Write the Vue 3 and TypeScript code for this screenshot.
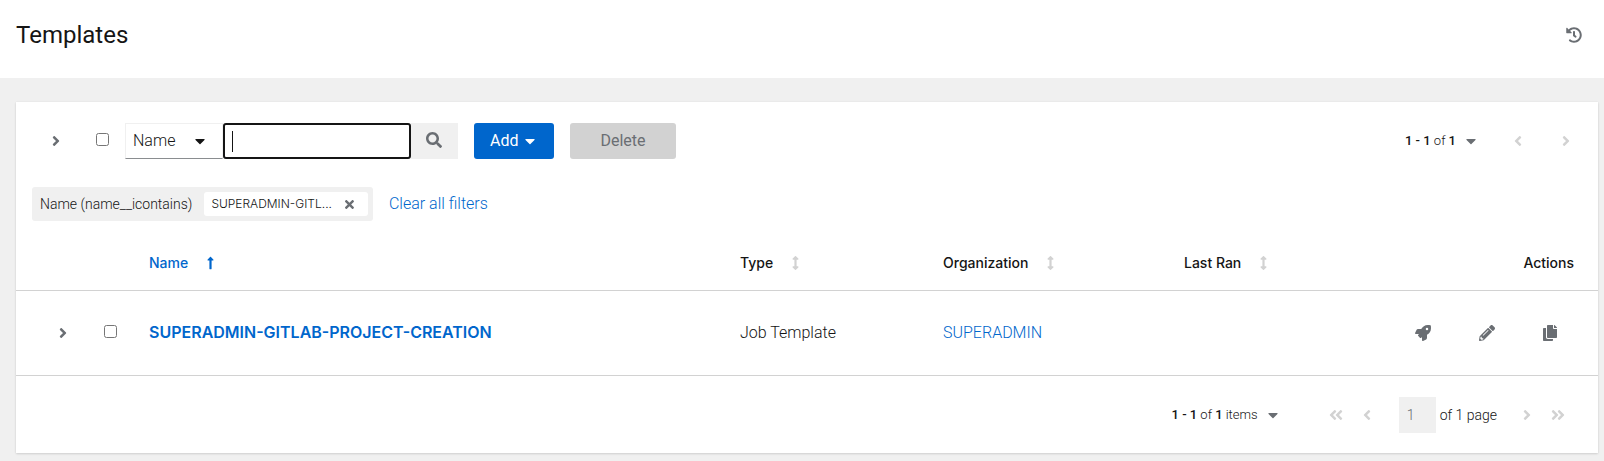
<script setup lang="ts">
import { ref } from 'vue'

interface Icon {
  width: number
  path: string
}

const icons: Record<string, Icon> = {
  right: { width: 256, path: 'M224.3 273l-136 136c-9.4 9.4-24.6 9.4-33.9 0l-22.6-22.6c-9.4-9.4-9.4-24.6 0-33.9l96.4-96.4-96.4-96.4c-9.4-9.4-9.4-24.6 0-33.9L54.3 103c9.4-9.4 24.6-9.4 33.9 0l136 136c9.5 9.4 9.5 24.6.1 34z' },
  left: { width: 256, path: 'M31.7 239l136-136c9.4-9.4 24.6-9.4 33.9 0l22.6 22.6c9.4 9.4 9.4 24.6 0 33.9L127.9 256l96.4 96.4c9.4 9.4 9.4 24.6 0 33.9L201.7 409c-9.4 9.4-24.6 9.4-33.9 0l-136-136c-9.5-9.4-9.5-24.6-.1-34z' },
  last: { width: 448, path: 'M224.3 273l-136 136c-9.4 9.4-24.6 9.4-33.9 0l-22.6-22.6c-9.4-9.4-9.4-24.6 0-33.9l96.4-96.4-96.4-96.4c-9.4-9.4-9.4-24.6 0-33.9L54.3 103c9.4-9.4 24.6-9.4 33.9 0l136 136c9.5 9.4 9.5 24.6.1 34zm192-34l-136-136c-9.4-9.4-24.6-9.4-33.9 0l-22.6 22.6c-9.4 9.4-9.4 24.6 0 33.9l96.4 96.4-96.4 96.4c-9.4 9.4-9.4 24.6 0 33.9l22.6 22.6c9.4 9.4 24.6 9.4 33.9 0l136-136c9.4-9.2 9.4-24.4 0-33.8z' },
  first: { width: 448, path: 'M223.7 239l136-136c9.4-9.4 24.6-9.4 33.9 0l22.6 22.6c9.4 9.4 9.4 24.6 0 33.9L319.9 256l96.4 96.4c9.4 9.4 9.4 24.6 0 33.9L393.7 409c-9.4 9.4-24.6 9.4-33.9 0l-136-136c-9.5-9.4-9.5-24.6-.1-34zm-192 34l136 136c9.4 9.4 24.6 9.4 33.9 0l22.6-22.6c9.4-9.4 9.4-24.6 0-33.9L127.9 256l96.4-96.4c9.4-9.4 9.4-24.6 0-33.9L201.7 103c-9.4-9.4-24.6-9.4-33.9 0l-136 136c-9.5 9.4-9.5 24.6-.1 34z' },
  caret: { width: 320, path: 'M31.3 192h257.3c17.8 0 26.7 21.5 14.1 34.1L174.1 354.8c-7.8 7.8-20.5 7.8-28.3 0L17.2 226.1C4.6 213.5 13.5 192 31.3 192z' },
  search: { width: 512, path: 'M505 442.7L405.3 343c-4.5-4.5-10.6-7-17-7H372c27.6-35.3 44-79.7 44-128C416 93.1 322.9 0 208 0S0 93.1 0 208s93.1 208 208 208c48.3 0 92.7-16.4 128-44v16.3c0 6.4 2.5 12.5 7 17l99.7 99.7c9.4 9.4 24.6 9.4 33.9 0l28.3-28.3c9.4-9.4 9.4-24.6.1-34zM208 336c-70.7 0-128-57.2-128-128 0-70.7 57.2-128 128-128 70.7 0 128 57.2 128 128 0 70.7-57.2 128-128 128z' },
  times: { width: 352, path: 'M242.72 256l100.07-100.07c12.28-12.28 12.28-32.19 0-44.48l-22.24-22.24c-12.28-12.28-32.19-12.28-44.48 0L176 189.28 75.93 89.21c-12.28-12.28-32.19-12.28-44.48 0L9.21 111.45c-12.28 12.28-12.28 32.19 0 44.48L109.28 256 9.21 356.07c-12.28 12.28-12.28 32.19 0 44.48l22.24 22.24c12.28 12.28 32.2 12.28 44.48 0L176 322.72l100.07 100.07c12.28 12.28 32.2 12.28 44.48 0l22.24-22.24c12.28-12.28 12.28-32.19 0-44.48L242.72 256z' },
  history: { width: 512, path: 'M504 255.531c.253 136.64-111.18 248.372-247.82 248.468-59.015.042-113.223-20.53-155.822-54.911-11.077-8.94-11.905-25.541-1.839-35.607l11.267-11.267c8.609-8.609 22.353-9.551 31.891-1.984C173.062 425.135 212.781 440 256 440c101.705 0 184-82.311 184-184 0-101.705-82.311-184-184-184-48.814 0-93.149 18.969-126.068 49.932l50.754 50.754c10.08 10.08 2.941 27.314-11.313 27.314H24c-8.837 0-16-7.163-16-16V38.627c0-14.254 17.234-21.393 27.314-11.314l49.372 49.372C129.209 34.136 189.552 8 256 8c136.81 0 247.747 110.78 248 247.531zm-180.912 78.784l9.823-12.63c8.138-10.463 6.253-25.542-4.21-33.679L288 256.349V152c0-13.255-10.745-24-24-24h-16c-13.255 0-24 10.745-24 24v135.651l65.409 50.874c10.463 8.137 25.541 6.253 33.679-4.21z' },
  rocket: { width: 512, path: 'M505.12 19.094c-1.189-5.531-6.658-11-12.207-12.188C460.716 0 435.507 0 410.407 0 307.175 0 245.269 55.203 199.052 128H94.838c-16.348.016-35.557 11.875-42.887 26.484L2.516 253.297A28.4 28.4 0 0 0 0 264a24.009 24.009 0 0 0 24.006 24h103.81l-22.474 22.469c-11.365 11.361-12.996 32.258 0 45.25l50.904 50.906c11.156 11.188 32.156 13.156 45.277 0l22.475-22.469V488a24.009 24.009 0 0 0 24.006 24 28.559 28.559 0 0 0 10.707-2.516l98.728-49.39c14.629-7.297 26.508-26.5 26.508-42.86V312.797c72.598-46.313 128.035-108.406 128.035-211.094.091-25.203.091-50.406-6.864-82.609zM384.04 168A40 40 0 1 1 424.05 128 40.023 40.023 0 0 1 384.04 168z' },
  pencil: { width: 512, path: 'M497.9 142.1l-46.1 46.1c-4.7 4.7-12.3 4.7-17 0l-111-111c-4.7-4.7-4.7-12.3 0-17l46.1-46.1c18.7-18.7 49.1-18.7 67.9 0l60.1 60.1c18.8 18.7 18.8 49.1 0 67.9zM284.2 99.8L21.6 362.4.4 483.9c-2.9 16.4 11.4 30.6 27.8 27.8l121.5-21.3 262.6-262.6c4.7-4.7 4.7-12.3 0-17l-111-111c-4.8-4.7-12.4-4.7-17.1 0zM124.1 339.9c-5.5-5.5-5.5-14.3 0-19.8l154-154c5.5-5.5 14.3-5.5 19.8 0s5.5 14.3 0 19.8l-154 154c-5.5 5.5-14.3 5.5-19.8 0zM88 424h48v36.3l-64.5 11.3-31.1-31.1L51.7 376H88v48z' },
  copy: { width: 448, path: 'M320 448v40c0 13.255-10.745 24-24 24H24c-13.255 0-24-10.745-24-24V120c0-13.255 10.745-24 24-24h72v296c0 30.879 25.121 56 56 56h168zm0-344V0H152c-13.255 0-24 10.745-24 24v368c0 13.255 10.745 24 24 24h272c13.255 0 24-10.745 24-24V128H344c-13.2 0-24-10.8-24-24zm120.971-31.029L375.029 7.029A24 24 0 0 0 358.059 0H352v96h96v-6.059a24 24 0 0 0-7.029-16.97z' },
  up: { width: 256, path: 'M88 166.059V468c0 6.627 5.373 12 12 12h56c6.627 0 12-5.373 12-12V166.059h46.059c21.382 0 32.09-25.851 16.971-40.971l-86.059-86.059c-9.373-9.373-24.569-9.373-33.941 0l-86.059 86.059c-15.119 15.119-4.411 40.971 16.971 40.971H88z' },
  sort: { width: 256, path: 'M214.059 377.941H168V134.059h46.059c21.382 0 32.09-25.851 16.971-40.971L144.971 7.029c-9.373-9.373-24.568-9.373-33.941 0L24.971 93.088c-15.119 15.119-4.411 40.971 16.971 40.971H88v243.882H41.941c-21.382 0-32.09 25.851-16.971 40.971l86.059 86.059c9.373 9.373 24.568 9.373 33.941 0l86.059-86.059c15.12-15.119 4.412-40.971-16.97-40.971z' },
}

const box = (name: string): string => `0 0 ${icons[name].width} 512`

const columns = [
  { key: 'name', label: 'Name', active: true },
  { key: 'type', label: 'Type', active: false },
  { key: 'org', label: 'Organization', active: false },
  { key: 'ran', label: 'Last Ran', active: false },
]

const rows = [
  { id: 1, name: 'SUPERADMIN-GITLAB-PROJECT-CREATION', type: 'Job Template', org: 'SUPERADMIN' },
]

const actions = [
  { icon: 'rocket', label: 'Launch template' },
  { icon: 'pencil', label: 'Edit template' },
  { icon: 'copy', label: 'Copy template' },
]

const query = ref('')
const page = ref('1')
</script>

<template>
  <div class="page">
    <header class="page-header">
      <h1>Templates</h1>
      <button class="plain" type="button" aria-label="View activity stream">
        <svg class="icon" :viewBox="box('history')"><path :d="icons.history.path" /></svg>
      </button>
    </header>

    <main class="card">
      <div class="toolbar">
        <button class="plain expand-all" type="button" aria-label="Expand all rows">
          <svg class="icon" :viewBox="box('right')"><path :d="icons.right.path" /></svg>
        </button>
        <input class="check check-all" type="checkbox" aria-label="Select all" />
        <form class="search" @submit.prevent>
          <div class="select">
            <select aria-label="Search by">
              <option>Name</option>
            </select>
            <svg class="icon" :viewBox="box('caret')"><path :d="icons.caret.path" /></svg>
          </div>
          <input v-model="query" class="query" type="text" aria-label="Search text" />
          <button class="search-button" type="submit" aria-label="Search">
            <svg class="icon" :viewBox="box('search')"><path :d="icons.search.path" /></svg>
          </button>
        </form>
        <button class="button primary" type="button">
          Add
          <svg class="icon" :viewBox="box('caret')"><path :d="icons.caret.path" /></svg>
        </button>
        <button class="button disabled" type="button" disabled>Delete</button>
        <nav class="pager top-pager" aria-label="Top pagination">
          <button class="plain range" type="button">
            <span><b>1 - 1</b> of <b>1</b></span>
            <svg class="icon" :viewBox="box('caret')"><path :d="icons.caret.path" /></svg>
          </button>
          <div class="steps">
            <button class="plain" type="button" disabled aria-label="Previous page">
              <svg class="icon" :viewBox="box('left')"><path :d="icons.left.path" /></svg>
            </button>
            <button class="plain" type="button" disabled aria-label="Next page">
              <svg class="icon" :viewBox="box('right')"><path :d="icons.right.path" /></svg>
            </button>
          </div>
        </nav>
      </div>

      <div class="filters">
        <div class="chip-group">
          <span class="chip-label">Name (name__icontains)</span>
          <span class="chip">
            <span>SUPERADMIN-GITL...</span>
            <button class="plain" type="button" aria-label="Remove filter">
              <svg class="icon" :viewBox="box('times')"><path :d="icons.times.path" /></svg>
            </button>
          </span>
        </div>
        <button class="link" type="button">Clear all filters</button>
      </div>

      <table>
        <colgroup>
          <col class="col-expand" />
          <col class="col-check" />
          <col class="col-name" />
          <col class="col-type" />
          <col class="col-org" />
          <col class="col-ran" />
          <col />
        </colgroup>
        <thead>
          <tr>
            <td></td>
            <td></td>
            <th v-for="column in columns" :key="column.key" scope="col">
              <button class="sorter" :class="{ active: column.active }" type="button">
                {{ column.label }}
                <svg class="icon" :viewBox="box(column.active ? 'up' : 'sort')">
                  <path :d="icons[column.active ? 'up' : 'sort'].path" />
                </svg>
              </button>
            </th>
            <th class="actions-head" scope="col">Actions</th>
          </tr>
        </thead>
        <tbody>
          <tr v-for="row in rows" :key="row.id">
            <td class="expand-cell">
              <button class="plain" type="button" aria-label="Expand row">
                <svg class="icon" :viewBox="box('right')"><path :d="icons.right.path" /></svg>
              </button>
            </td>
            <td class="check-cell">
              <input class="check" type="checkbox" :aria-label="`Select ${row.name}`" />
            </td>
            <td><a class="name-link" href="#">{{ row.name }}</a></td>
            <td>{{ row.type }}</td>
            <td><a href="#">{{ row.org }}</a></td>
            <td></td>
            <td>
              <div class="actions">
                <button v-for="action in actions" :key="action.icon" class="plain" type="button" :aria-label="action.label">
                  <svg class="icon" :viewBox="box(action.icon)"><path :d="icons[action.icon].path" /></svg>
                </button>
              </div>
            </td>
          </tr>
        </tbody>
      </table>

      <nav class="pager bottom-pager" aria-label="Bottom pagination">
        <button class="plain range" type="button">
          <span><b>1 - 1</b> of <b>1</b> items</span>
          <svg class="icon" :viewBox="box('caret')"><path :d="icons.caret.path" /></svg>
        </button>
        <div class="steps">
          <button class="plain" type="button" disabled aria-label="First page">
            <svg class="icon" :viewBox="box('first')"><path :d="icons.first.path" /></svg>
          </button>
          <button class="plain" type="button" disabled aria-label="Previous page">
            <svg class="icon" :viewBox="box('left')"><path :d="icons.left.path" /></svg>
          </button>
        </div>
        <label class="page-number">
          <input v-model="page" type="text" disabled aria-label="Current page" />
          <span>of 1 page</span>
        </label>
        <div class="steps">
          <button class="plain" type="button" disabled aria-label="Next page">
            <svg class="icon" :viewBox="box('right')"><path :d="icons.right.path" /></svg>
          </button>
          <button class="plain" type="button" disabled aria-label="Last page">
            <svg class="icon" :viewBox="box('last')"><path :d="icons.last.path" /></svg>
          </button>
        </div>
      </nav>
    </main>
  </div>
</template>

<style>
body {
  margin: 0;
  background: #f0f0f0;
}
</style>

<style scoped>
.page {
  color: #151515;
  font: 300 16px/24px Roboto, sans-serif;
}

.page * {
  box-sizing: border-box;
}

button,
input,
select {
  margin: 0;
  font: inherit;
  color: inherit;
}

a {
  color: #06c;
  text-decoration: none;
}

.icon {
  display: block;
  flex: none;
  height: 16px;
  fill: currentColor;
}

.plain {
  display: flex;
  align-items: center;
  justify-content: center;
  padding: 0;
  border: 0;
  background: none;
  color: #6a6e73;
}

.plain:disabled {
  color: #d2d2d2;
}

.page-header {
  display: flex;
  align-items: center;
  justify-content: space-between;
  padding: 19px 22px 27px 16px;
  background: #fff;
}

h1 {
  margin: 0;
  font-size: 24px;
  font-weight: 400;
  line-height: 32px;
}

.card {
  margin: 24px 6px 8px 16px;
  background: #fff;
  box-shadow: 0 1px 2px rgba(3, 3, 3, 0.12), 0 0 2px rgba(3, 3, 3, 0.06);
}

.toolbar {
  display: flex;
  align-items: center;
  padding: 21px 16px 0;
}

.expand-all {
  width: 48px;
}

.check {
  display: block;
  width: 13px;
  height: 13px;
}

.check-all {
  margin: 0 16px 4px;
}

.search {
  display: flex;
  height: 36px;
  margin-right: 16px;
}

.select {
  display: grid;
  width: 98px;
}

.select select,
.select .icon {
  grid-area: 1 / 1;
}

.select select {
  appearance: none;
  padding: 0 7px;
  border: 1px solid #f0f0f0;
  border-bottom-color: #8a8d90;
  border-radius: 0;
  background: #fff;
}

.select .icon {
  place-self: center end;
  margin-right: 18px;
  pointer-events: none;
}

/* The resting text cursor is painted as a one-pixel bar. */
.query {
  width: 188px;
  padding: 0 8px;
  border: 2px solid #151515;
  border-radius: 3px;
  background: linear-gradient(#151515, #151515) 7px center / 1px 21px no-repeat #fff;
  outline: 0;
}

.search-button {
  display: flex;
  align-items: center;
  width: 47px;
  padding: 0 0 2px 15px;
  border: 0;
  background: #f0f0f0;
  color: #6a6e73;
}

.button {
  display: flex;
  align-items: center;
  gap: 7px;
  height: 36px;
  border: 0;
  border-radius: 3px;
  font-weight: 400;
}

.primary {
  padding: 0 19px 0 16px;
  background: #06c;
  color: #fff;
}

.disabled {
  margin-left: 16px;
  padding: 0 30px;
  background: #d2d2d2;
  color: #6a6e73;
}

.pager {
  display: flex;
  align-items: center;
  font-size: 14px;
}

.pager .range {
  gap: 10px;
  font-size: 13px;
}

.range span {
  color: #151515;
}

.range b {
  font-weight: 500;
}

.steps {
  display: flex;
  align-items: center;
}

.top-pager {
  margin-left: auto;
}

.top-pager .steps {
  gap: 40px;
  margin-left: 38px;
  padding-right: 12px;
}

.filters {
  display: flex;
  align-items: center;
  gap: 16px;
  padding: 28px 16px 15px;
}

.chip-group {
  display: flex;
  align-items: center;
  gap: 12px;
  height: 34px;
  padding: 0 5px 0 8px;
  border-radius: 3px;
  background: #f0f0f0;
}

.chip-label {
  font-size: 14px;
}

.chip {
  display: flex;
  align-items: center;
  height: 24px;
  padding-left: 7px;
  border-radius: 3px;
  background: #fff;
  font: 300 12px/18px Inter, sans-serif;
}

.chip .plain {
  width: 36px;
}

.chip .icon {
  height: 13px;
}

.link {
  padding: 0;
  border: 0;
  background: none;
  color: #06c;
}

table {
  width: 100%;
  border-collapse: collapse;
  table-layout: fixed;
}

.col-expand {
  width: 80px;
}

.col-check {
  width: 37px;
}

.col-name {
  width: 591px;
}

.col-type {
  width: 203px;
}

.col-org {
  width: 241px;
}

.col-ran {
  width: 200px;
}

th,
td {
  padding: 0 16px;
  text-align: left;
  white-space: nowrap;
}

thead tr {
  height: 54px;
  border-bottom: 1px solid #d2d2d2;
}

tbody tr {
  height: 85px;
  border-bottom: 1px solid #d2d2d2;
}

th {
  font: 500 14px/20px Inter, sans-serif;
}

th,
.sorter {
  color: #151515;
}

.sorter {
  display: flex;
  align-items: center;
  gap: 19px;
  padding: 0;
  border: 0;
  background: none;
}

.sorter .icon {
  height: 14px;
  color: #d2d2d2;
}

.sorter.active,
.sorter.active .icon {
  color: #06c;
}

th.actions-head {
  padding-right: 24px;
  text-align: right;
}

.expand-cell {
  padding: 0 0 0 43px;
}

.check-cell {
  padding: 0 0 2px 8px;
}

.name-link {
  font: 600 16px/24px Inter, sans-serif;
}

.actions {
  display: flex;
  justify-content: flex-end;
  gap: 48px;
  padding-right: 25px;
}

.bottom-pager {
  justify-content: flex-end;
  padding: 21px 33px 20px 16px;
}

.bottom-pager .steps {
  gap: 20px;
}

.bottom-pager .range + .steps {
  margin-left: 51px;
}

.page-number {
  display: flex;
  align-items: center;
  gap: 4px;
  margin: 0 26px 0 28px;
}

.page-number input {
  width: 37px;
  height: 36px;
  padding: 0 8px;
  border: 0;
  border-radius: 0;
  background: #f0f0f0;
  color: #6a6e73;
}
</style>
